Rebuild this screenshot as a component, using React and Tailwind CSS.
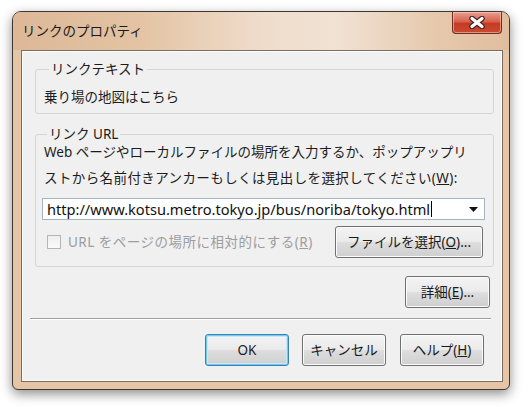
export default function App() {
  const btn =
    "h-[32px] rounded-[3px] border border-[#707070] bg-[linear-gradient(#f3f3f3_0%,#ebebeb_48%,#dddddd_52%,#cfcfcf_100%)] shadow-[inset_0_0_0_1px_#fbfbfb] text-[13.5px] text-[#1a1a1a] flex items-center justify-center leading-[20px]";
  return (
    <div className="w-[530px] h-[407px] bg-white pt-[11px] pl-[12px] font-['Noto_Sans','Noto_Sans_CJK_JP',sans-serif] text-[#1c1c1c]">
      <div className="w-[498px] h-[379px] rounded-t-[9px] rounded-b-[6px] border border-[#3f3833] bg-[#e6c5a6] shadow-[0_4px_12px_rgba(0,0,0,0.45)] flex flex-col overflow-hidden">
        {/* title bar */}
        <div className="h-[38px] shrink-0 flex items-start bg-[linear-gradient(90deg,#dcb897_0%,#e3c3a3_25%,#efdccb_50%,#f1e2d4_65%,#e6c9ad_85%,#e0bd9d_100%)]">
          <div className="pl-[9px] pt-[9px] text-[13.5px] leading-[20px] text-[#1a1a1a]">リンクのプロパティ</div>
          <div className="ml-auto mr-[7px] w-[50px] h-[22px] rounded-b-[4px] border border-t-0 border-[#6b2d24] bg-[linear-gradient(#e9a090_0%,#d8624c_45%,#c53b25_55%,#cc4a30_100%)] shadow-[inset_0_0_0_1px_rgba(255,220,210,0.5)] flex items-center justify-center">
            <svg width="18" height="13" viewBox="0 0 18 13">
              <path d="M4 2.5 L14 10.5 M14 2.5 L4 10.5" stroke="#4a2420" strokeWidth="5.5" strokeLinecap="round" />
              <path d="M4 2.5 L14 10.5 M14 2.5 L4 10.5" stroke="#ffffff" strokeWidth="3.2" strokeLinecap="round" />
            </svg>
          </div>
        </div>
        {/* client area */}
        <div className="ml-[8px] mr-[6px] mb-[7px] flex-1 border border-[#7d6b5d] bg-[#f0f0f0] shadow-[inset_1px_1px_0_#ffffff,inset_-1px_-1px_0_#ffffff] flex flex-col">
          <fieldset className="mt-[11px] ml-[13px] mr-[8px] border border-[#d5d5d5] rounded-[3px] pl-[8px] pr-[8px] pt-[11px] pb-[6px]">
            <legend className="ml-[5px] px-[2px] text-[13.5px] leading-[14px]">リンクテキスト</legend>
            <div className="text-[13.5px] leading-[20px]">乗り場の地図はこちら</div>
          </fieldset>
          <fieldset className="mt-[13px] ml-[13px] mr-[8px] border border-[#d5d5d5] rounded-[3px] pl-[6px] pr-[8px] pb-[8px]">
            <legend className="ml-[5px] px-[2px] text-[13.5px] leading-[14px]">リンク URL</legend>
            <div className="pl-[2px] text-[13.5px] leading-[22px]">
              <div>Web ページやローカルファイルの場所を入力するか、ポップアップリ</div>
              <div className="mt-[4px] tracking-[0.4px]">
                ストから名前付きアンカーもしくは見出しを選択してください(<span className="underline">W</span>):
              </div>
            </div>
            <div className="mt-[9px] h-[22px] border border-[#a3b4c6] bg-white flex items-center pl-[4px] pr-[6px]">
              <span className="text-[14.6px] leading-[18px] text-[#111]">http://www.kotsu.metro.tokyo.jp/bus/noriba/tokyo.html</span>
              <span className="ml-[1px] w-[1px] h-[16px] bg-black" />
              <svg className="ml-auto" width="9" height="5" viewBox="0 0 9 5">
                <path d="M0 0 H9 L4.5 5 Z" fill="#111" />
              </svg>
            </div>
            <div className="mt-[6px] flex items-center">
              <div className="ml-[5px] w-[14px] h-[14px] border border-[#b5b5b5] bg-[linear-gradient(#eeeeee,#fafafa)]" />
              <span className="ml-[7px] text-[13.5px] leading-[20px] text-[#9d9d9d] tracking-[0.5px]">
                URL をページの場所に相対的にする(<span className="underline">R</span>)
              </span>
              <div className={btn + " ml-auto mr-[2px] w-[148px] h-[31px]"}>
                ファイルを選択(<span className="underline">O</span>)...
              </div>
            </div>
          </fieldset>
          <div className="mt-[9px] flex justify-end mr-[12px]">
            <div className={btn + " w-[85px]"}>
              詳細(<span className="underline">E</span>)...
            </div>
          </div>
          <div className="mt-[10px] ml-[8px] mr-[11px] h-[1px] bg-[#a0a0a0] shadow-[0_1px_0_#ffffff]" />
          <div className="mt-[15px] flex justify-end mr-[18px] gap-[13px]">
            <div className="h-[32px] w-[84px] rounded-[3px] border border-[#3c7fb1] bg-[linear-gradient(#f3f3f3_0%,#ebebeb_48%,#dddddd_52%,#cfcfcf_100%)] shadow-[inset_0_0_0_1px_#6fcdf5,inset_0_0_0_2px_#c6e9f8] text-[13.5px] flex items-center justify-center">
              OK
            </div>
            <div className={btn + " w-[84px]"}>キャンセル</div>
            <div className={btn + " w-[84px] ml-[1px]"}>
              ヘルプ(<span className="underline">H</span>)
            </div>
          </div>
        </div>
      </div>
    </div>
  );
}
